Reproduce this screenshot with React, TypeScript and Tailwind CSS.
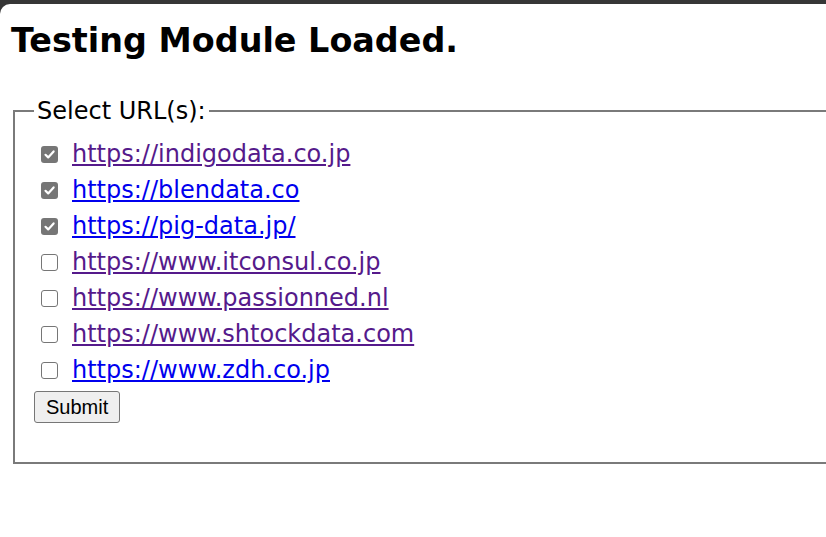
import React from "react";

const urls: { href: string; checked: boolean; visited: boolean }[] = [
  { href: "https://indigodata.co.jp", checked: true, visited: true },
  { href: "https://blendata.co", checked: true, visited: false },
  { href: "https://pig-data.jp/", checked: true, visited: false },
  { href: "https://www.itconsul.co.jp", checked: false, visited: true },
  { href: "https://www.passionned.nl", checked: false, visited: true },
  { href: "https://www.shtockdata.com", checked: false, visited: true },
  { href: "https://www.zdh.co.jp", checked: false, visited: false },
];

function Box({ checked }: { checked: boolean }) {
  if (checked) {
    return (
      <span className="flex h-[17px] w-[17px] shrink-0 items-center justify-center rounded-[3px] bg-[#767676]">
        <svg width="13" height="13" viewBox="0 0 13 13">
          <path d="M2.5 6.8 L5.2 9.4 L10.6 3.4" fill="none" stroke="#ffffff" strokeWidth="2.2" strokeLinecap="round" strokeLinejoin="round" />
        </svg>
      </span>
    );
  }
  return <span className="block h-[17px] w-[17px] shrink-0 rounded-[3px] border border-[#767676] bg-white" />;
}

export default function App() {
  return (
    <div className="h-[537px] w-[826px] overflow-hidden bg-[#363636] pt-[4px]">
      <div
        className="h-[533px] overflow-hidden rounded-tl-[10px] bg-white text-black"
        style={{ fontFamily: '"DejaVu Sans", Verdana, sans-serif' }}
      >
        <h1 className="ml-[11px] pt-[18px] text-[33.4px] font-bold leading-[38px]">Testing Module Loaded.</h1>
        <fieldset className="ml-[13px] mt-[37px] w-[900px] border-2 border-[#7a7a7a] pb-[38px] pl-[19px] pt-[11px] text-[24px]">
          <legend className="px-[3px] leading-[28px]">Select URL(s):</legend>
          {urls.map((u) => (
            <div key={u.href} className="flex h-[36px] items-center">
              <span className="ml-[7px] mr-[14px]">
                <Box checked={u.checked} />
              </span>
              <a
                href="#"
                className={`leading-[28px] underline ${u.visited ? "text-[#551a8b]" : "text-[#0000ee]"}`}
              >
                {u.href}
              </a>
            </div>
          ))}
          <button
            className="mt-[1px] h-[32px] rounded-[3px] border border-[#767676] bg-[#efefef] px-[11px] text-[20px] leading-[22px]"
            style={{ fontFamily: '"Liberation Sans", Arial, sans-serif' }}
          >
            Submit
          </button>
        </fieldset>
      </div>
    </div>
  );
}
